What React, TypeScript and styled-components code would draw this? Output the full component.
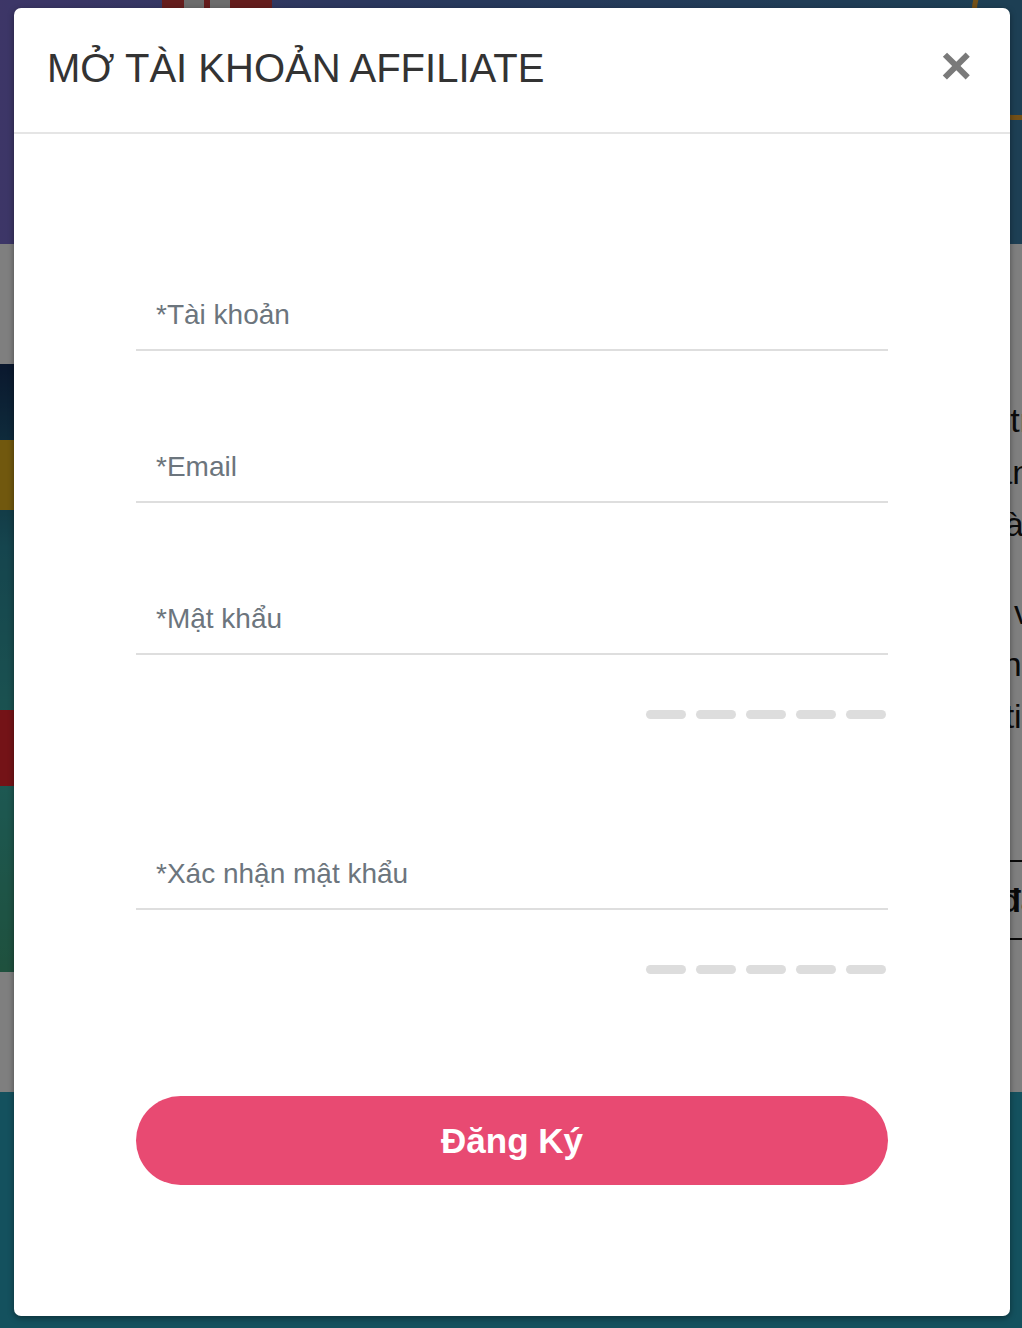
import React from 'react'
import styled, { createGlobalStyle } from 'styled-components'

const GlobalStyle = createGlobalStyle`
  html, body {
    margin: 0;
    padding: 0;
  }
  body {
    font-family: 'Liberation Sans', Arial, sans-serif;
    background: #ffffff;
  }
  * {
    box-sizing: border-box;
  }
`

const Page = styled.div`
  position: relative;
  width: 1022px;
  height: 1328px;
  overflow: hidden;
  display: flex;
  flex-direction: column;
`

const Banner = styled.div`
  height: 244px;
  display: flex;
  background: linear-gradient(90deg, #7a6ccf 0%, #4f72b8 45%, #3a7fa8 100%);
  position: relative;
`

const BannerBadge = styled.div`
  margin-left: 162px;
  width: 110px;
  height: 16px;
  background: #c83a3a;
  display: flex;
  gap: 6px;
  padding-left: 22px;

  span {
    width: 20px;
    background: #d8d8d8;
  }
`

const BannerRing = styled.div`
  margin-left: auto;
  margin-right: -40px;
  margin-top: -30px;
  width: 90px;
  height: 150px;
  border: 5px solid #e7a12e;
  border-radius: 40px;
`

const Content = styled.div`
  height: 848px;
  background: #ffffff;
  display: grid;
  grid-template-columns: 520px 1fr;
  column-gap: 40px;
  padding: 120px 0;
`

const Poster = styled.div`
  background: linear-gradient(180deg, #14305c 0%, #2b8a9c 30%, #3ab0a4 70%, #3ea27c 100%);
  display: flex;
  flex-direction: column;
  padding-top: 76px;
  gap: 200px;
`

const PosterStripe = styled.div<{ color: string; h: number }>`
  width: 40px;
  height: ${({ h }) => h}px;
  background: ${({ color }) => color};
`

const TextCol = styled.div`
  display: flex;
  flex-direction: column;
  padding-top: 30px;
  margin-right: -28px;
  color: #141414;
  font-size: 34px;
`

const TextLine = styled.div`
  text-align: right;
  white-space: nowrap;
  height: 52px;
  line-height: 52px;
`

const Gap = styled.div`
  height: 36px;
`

const TableRow = styled.div`
  margin-top: 118px;
  height: 80px;
  border-top: 2px solid #111;
  border-bottom: 2px solid #111;
  text-align: right;
  line-height: 76px;
  font-size: 34px;
  font-weight: 700;
  padding-right: 10px;
`

const Footer = styled.div`
  flex: 1;
  background: #29a3bd;
`

const Overlay = styled.div`
  position: absolute;
  inset: 0;
  background: rgba(0, 0, 0, 0.5);
`

const Modal = styled.div`
  position: absolute;
  left: 14px;
  top: 8px;
  width: 996px;
  height: 1308px;
  background: #ffffff;
  border-radius: 7px;
  box-shadow: 0 2px 6px rgba(0, 0, 0, 0.4);
  display: flex;
  flex-direction: column;
`

const Header = styled.div`
  height: 126px;
  padding: 0 38px 4px 33px;
  display: flex;
  align-items: center;
  justify-content: space-between;
  border-bottom: 2px solid #e5e5e5;
`

const Title = styled.h4`
  margin: 0;
  font-size: 40px;
  font-weight: 400;
  color: #333333;
`

const Close = styled.button`
  border: none;
  background: transparent;
  padding: 0;
  font-family: 'Liberation Sans', Arial, sans-serif;
  font-size: 54px;
  font-weight: 700;
  line-height: 1;
  color: #7a7a7a;
  cursor: pointer;
  margin-top: -7px;
`

const Body = styled.form`
  padding: 157px 122px 0;
  display: flex;
  flex-direction: column;
`

const Field = styled.input<{ $gap: number }>`
  display: block;
  width: 100%;
  height: 60px;
  margin-top: ${({ $gap }) => $gap}px;
  padding: 0 20px 10px;
  border: none;
  border-bottom: 2px solid #dedede;
  outline: none;
  font-family: 'Liberation Sans', Arial, sans-serif;
  font-size: 28px;
  color: #495057;
  background: transparent;

  &::placeholder {
    color: #6c757d;
  }
`

const Meter = styled.div`
  display: flex;
  justify-content: flex-end;
  gap: 10px;
  margin-top: 55px;
  padding-right: 2px;
`

const MeterBar = styled.span`
  width: 40px;
  height: 9px;
  border-radius: 5px;
  background: #dddddd;
`

const Submit = styled.button`
  margin-top: 122px;
  width: 100%;
  height: 89px;
  border: none;
  border-radius: 45px;
  background: #e84a72;
  color: #ffffff;
  font-family: 'Liberation Sans', Arial, sans-serif;
  font-size: 35px;
  font-weight: 700;
  cursor: pointer;
`

const StrengthMeter = () => (
  <Meter>
    {[0, 1, 2, 3, 4].map((i) => (
      <MeterBar key={i} />
    ))}
  </Meter>
)

const backgroundLines = ['Chương trình cộng tác viên tra', 'Đăng ký tài khoản nhanh', 'Hoa hồng minh bạch và k']

const backgroundLines2 = ['Thanh toán đúng hạn, nhanh và', 'Hỗ trợ tận tình 24/7 đơn giản u', 'Công cụ quản lý chi tiết']

export default function App() {
  return (
    <>
      <GlobalStyle />
      <Page>
        <Banner>
          <BannerBadge>
            <span />
            <span />
          </BannerBadge>
          <BannerRing />
        </Banner>
        <Content>
          <Poster>
            <PosterStripe color="#e2b11c" h={70} />
            <PosterStripe color="#e8262e" h={76} />
          </Poster>
          <TextCol>
            {backgroundLines.map((l) => (
              <TextLine key={l}>{l}</TextLine>
            ))}
            <Gap />
            {backgroundLines2.map((l) => (
              <TextLine key={l}>{l}</TextLine>
            ))}
            <TableRow>Đăng ký ngay tại đâ</TableRow>
          </TextCol>
        </Content>
        <Footer />
        <Overlay />
        <Modal>
          <Header>
            <Title>MỞ TÀI KHOẢN AFFILIATE</Title>
            <Close type="button" aria-label="Đóng">
              ×
            </Close>
          </Header>
          <Body onSubmit={(e) => e.preventDefault()}>
            <Field $gap={0} type="text" placeholder="*Tài khoản" />
            <Field $gap={92} type="email" placeholder="*Email" />
            <Field $gap={92} type="password" placeholder="*Mật khẩu" />
            <StrengthMeter />
            <Field $gap={131} type="password" placeholder="*Xác nhận mật khẩu" />
            <StrengthMeter />
            <Submit type="submit">Đăng Ký</Submit>
          </Body>
        </Modal>
      </Page>
    </>
  )
}
